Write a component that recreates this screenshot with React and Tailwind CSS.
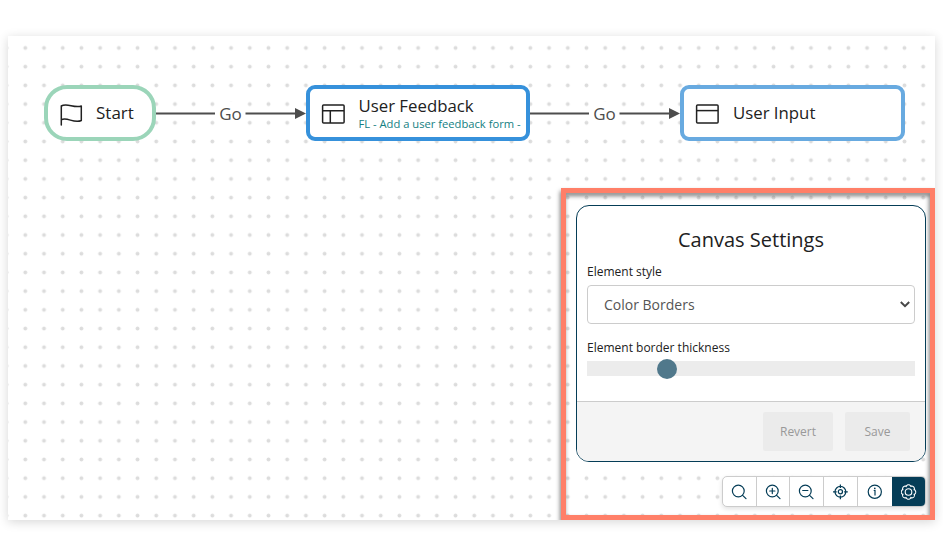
import React from "react";

const tool = "flex h-full items-center justify-center";

function DotGrid() {
  return (
    <svg className="absolute inset-0 h-full w-full" aria-hidden="true">
      <defs>
        <pattern id="dots" x="7.95" y="2.6" width="18.706" height="18.706" patternUnits="userSpaceOnUse">
          <circle cx="9.35" cy="9.35" r="1.95" fill="#dcdcdc" />
        </pattern>
      </defs>
      <rect width="100%" height="100%" fill="url(#dots)" />
    </svg>
  );
}

function Link({ className }) {
  return (
    <div className={`absolute top-[66px] flex h-[24px] w-[151px] items-center ${className}`}>
      <svg className="absolute inset-0" width="151" height="24" fill="none">
        <path d="M0 11.5H59M89.5 11.5H141" stroke="#4d4d4d" strokeWidth="2" />
        <path d="M139 6L150 11.5L139 17Z" fill="#4d4d4d" />
      </svg>
      <span className="relative ml-[60px] w-[29px] rounded-full bg-white text-center text-[17px] leading-[24px] text-[#4d4d4d]">Go</span>
    </div>
  );
}

function Glass({ children }) {
  return (
    <svg width="16" height="16" viewBox="0 0 16 16" fill="none" stroke="#053d57" strokeWidth="1.2" strokeLinecap="round">
      <circle cx="7.3" cy="7" r="5.9" />
      <path d="M11.6 11.3L15 14.7" />
      {children}
    </svg>
  );
}

function Gear() {
  const points = [];
  for (let i = 0; i < 128; i++) {
    const a = (i / 128) * Math.PI * 2;
    const r = 5.9 + 1.3 * Math.sqrt(Math.abs(Math.cos(4 * a)));
    points.push(`${(7.5 + r * Math.sin(a)).toFixed(2)},${(8 - r * Math.cos(a)).toFixed(2)}`);
  }
  return (
    <svg width="16" height="16" viewBox="0 0 16 16" fill="none" stroke="#fff" strokeWidth="1.1">
      <polygon points={points.join(" ")} strokeLinejoin="round" />
      <circle cx="7.5" cy="8" r="3.3" />
    </svg>
  );
}

function Toolbar() {
  return (
    <div className="mt-[14px] ml-auto mr-[4px] flex h-[31px] w-[204px] overflow-hidden rounded-[5px] border border-[#ccc] bg-white shadow-[0_2px_5px_rgba(0,0,0,0.12)]">
      <button className={`${tool} w-[34px] border-r border-[#ccc] pr-px`}><Glass /></button>
      <button className={`${tool} w-[33px] border-r border-[#ccc]`}><Glass><path d="M4.7 7H9.9M7.3 4.4V9.6" /></Glass></button>
      <button className={`${tool} w-[34px] border-r border-[#ccc] pr-px`}><Glass><path d="M4.7 6.5H9.9" /></Glass></button>
      <button className={`${tool} w-[34px] border-r border-[#ccc] pr-px`}>
        <svg width="16" height="16" viewBox="0 0 16 16" fill="none" stroke="#053d57" strokeWidth="1.25">
          <circle cx="8.4" cy="7.8" r="5.4" />
          <circle cx="8.4" cy="7.8" r="2.1" />
          <path d="M8.4 .4V4.1M8.4 11.5V15.2M1 7.8H4.7M12.1 7.8H15.8" />
        </svg>
      </button>
      <button className={`${tool} w-[34px] pr-px`}>
        <svg width="16" height="16" viewBox="0 0 16 16" fill="none" stroke="#053d57" strokeWidth="1.2">
          <circle cx="7.8" cy="7.8" r="6.6" />
          <path d="M6.7 6.5H8V11.6" />
          <circle cx="7.8" cy="4.4" r=".85" fill="#053d57" stroke="none" />
        </svg>
      </button>
      <button className={`${tool} flex-1 bg-[#053d57]`}><Gear /></button>
    </div>
  );
}

function SettingsPanel() {
  return (
    <div className="ml-[10px] mt-[12px] flex h-[257px] w-[350px] flex-col overflow-hidden rounded-[13px] border border-[#053d57] bg-white">
      <div className="flex h-[195px] flex-col px-[10px]">
        <h2 className="mt-[19px] text-center text-[20px] leading-[30px] text-[#212121]">Canvas Settings</h2>
        <label className="mt-[8px] text-[12px] leading-[18px] text-[#212121]">Element style</label>
        <div className="mt-[4px] flex h-[39px] items-center justify-between rounded-[4px] border border-[#ccc] pl-[16px] pr-[4px]">
          <span className="text-[14px] text-[#555]">Color Borders</span>
          <svg width="10" height="7" viewBox="0 0 10 7" fill="none" stroke="#484848" strokeWidth="2">
            <path d="M.8 1L5 5.2L9.2 1" />
          </svg>
        </div>
        <label className="mt-[15px] text-[12px] leading-[18px] text-[#212121]">Element border thickness</label>
        <div className="mt-[4px] flex h-[15px] items-center bg-[#ececec] pl-[70px]">
          <div className="h-[20px] w-[20px] rounded-full bg-[#50788b]" />
        </div>
      </div>
      <div className="flex flex-1 items-start justify-end gap-[12px] border-t border-[#ccc] bg-[#f4f4f4] pr-[15px] pt-[10px] text-[12px] text-[#999]">
        <button className="h-[39px] w-[70px] rounded-[2px] bg-[#ebebeb]">Revert</button>
        <button className="h-[39px] w-[65px] rounded-[2px] bg-[#ebebeb]">Save</button>
      </div>
    </div>
  );
}

export default function App() {
  return (
    <div className="h-[555px] w-[943px] overflow-hidden bg-white px-[8px] pt-[36px] font-['Open_Sans','Noto_Sans',sans-serif]">
      <div className="h-[484px] w-[927px] shadow-[0_2px_10px_rgba(0,0,0,0.16)]">
        <div className="relative h-full w-full overflow-hidden bg-white">
          <DotGrid />
          <div className="absolute left-[36px] top-[49px] flex h-[56px] w-[112px] items-center rounded-[23px] border-[4px] border-[#9bd5b9] bg-white pl-[11px]">
            <svg className="mt-px" width="24" height="24" viewBox="0 0 24 24" fill="none" stroke="#212121" strokeWidth="1.5" strokeLinejoin="round" strokeLinecap="round">
              <path d="M2.3 23V4C8 .5 15 6.5 22.3 4V18.5C15 22 8 14.5 2.3 17.8" />
            </svg>
            <span className="ml-[13px] text-[17px] leading-[24px] text-[#212121]">Start</span>
          </div>
          <Link className="left-[148px]" />
          <div className="absolute left-[298px] top-[49px] flex h-[56px] w-[224px] items-center rounded-[9px] border-[4px] border-[#3691db] bg-white pl-[11px]">
            <svg className="mt-px" width="24" height="20" viewBox="0 0 24 20" fill="none" stroke="#212121" strokeWidth="1.5">
              <rect x="1.6" y=".9" width="21.5" height="18" rx="1" />
              <path d="M1.6 6.8H23M9.3 6.8V19" />
            </svg>
            <div className="ml-[13.5px] whitespace-nowrap">
              <div className="text-[16.8px] leading-[22px] text-[#212121]">User Feedback</div>
              <div className="text-[11.2px] leading-[14px] text-[#138082]">FL - Add a user feedback form -</div>
            </div>
          </div>
          <Link className="left-[522px]" />
          <div className="absolute left-[672px] top-[49px] flex h-[56px] w-[225px] items-center rounded-[9px] border-[4px] border-[#68aae0] bg-white pl-[11px]">
            <svg className="mt-px" width="24" height="20" viewBox="0 0 24 20" fill="none" stroke="#212121" strokeWidth="1.5">
              <rect x="1.6" y=".9" width="21.5" height="18" rx="1" />
              <path d="M1.6 6.6H23" />
            </svg>
            <span className="ml-[14px] text-[16.8px] leading-[24px] text-[#212121]">User Input</span>
          </div>
          <div className="absolute left-[553px] top-[152px] h-[332px] w-[374px] border-[5px] border-[#ff7f68] drop-shadow-[-1px_3px_2px_rgba(0,0,0,0.5)]" />
          <div className="absolute left-[558px] top-[157px] flex h-[322px] w-[364px] flex-col">
            <SettingsPanel />
            <Toolbar />
          </div>
        </div>
      </div>
    </div>
  );
}
